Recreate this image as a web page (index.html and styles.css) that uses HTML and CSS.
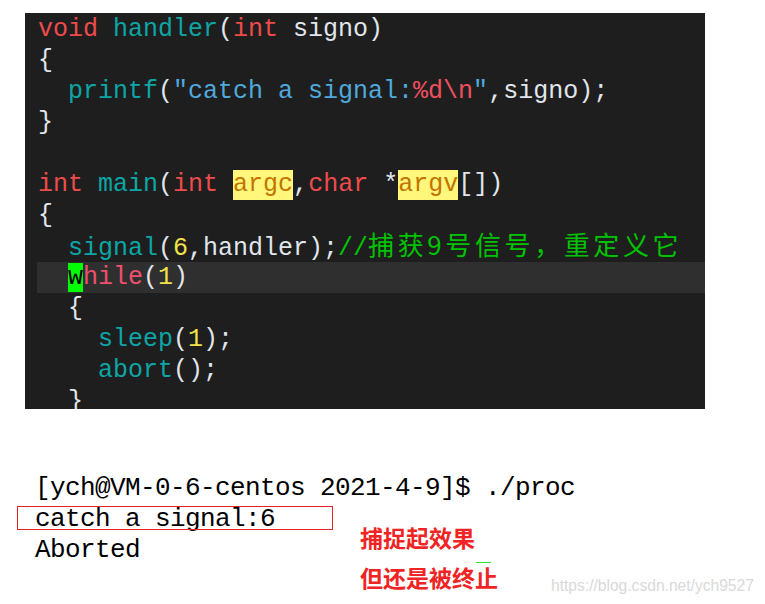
FILE: index.html
```html
<!DOCTYPE html>
<html>
<head>
<meta charset="utf-8">
<link rel="stylesheet" href="styles.css">
</head>
<body>
<div class="code">
  <div class="ln"><span class="kw">void</span> <span class="fn">handler</span><span class="pl">(</span><span class="kw">int</span> <span class="pl">signo)</span></div>
  <div class="ln"><span class="pl">{</span></div>
  <div class="ln">  <span class="fn">printf</span><span class="pl">(</span><span class="str">"catch a signal:</span><span class="fmt">%d\n</span><span class="str">"</span><span class="pl">,signo);</span></div>
  <div class="ln"><span class="pl">}</span></div>
  <div class="ln"> </div>
  <div class="ln"><span class="kw">int</span> <span class="fn">main</span><span class="pl">(</span><span class="kw">int</span> <span class="mark">argc</span><span class="pl">,</span><span class="kw">char</span> <span class="pl">*</span><span class="mark">argv</span><span class="pl">[])</span></div>
  <div class="ln"><span class="pl">{</span></div>
  <div class="ln">  <span class="fn">signal</span><span class="pl">(</span><span class="num">6</span><span class="pl">,handler);</span><span class="cmt">//<span class="cjk">捕获9号信号，重定义它</span></span></div>
  <div class="ln cur">  <span class="cursor">w</span><span class="wh">hile</span><span class="pl">(</span><span class="num">1</span><span class="pl">)</span></div>
  <div class="ln">  <span class="pl">{</span></div>
  <div class="ln">    <span class="fn">sleep</span><span class="pl">(</span><span class="num">1</span><span class="pl">);</span></div>
  <div class="ln">    <span class="fn">abort</span><span class="pl">();</span></div>
  <div class="ln">  <span class="pl">}</span></div>
</div>

<div class="bottom">
  <div class="term">
    <div class="tl">[ych@VM-0-6-centos 2021-4-9]$ ./proc</div>
    <div class="tl boxed">catch a signal:6<span class="redbox"></span></div>
    <div class="tl">Aborted</div>
  </div>
  <div class="notes">
    <div class="note">捕捉起效果</div>
    <div class="note">但还是被终<span class="last">止<span class="tick"></span></span></div>
  </div>
</div>
<div class="wm">https://blog.csdn.net/ych9527</div>
</body>
</html>
```
FILE: styles.css
```css
html, body {
  margin: 0;
  padding: 0;
  background: #ffffff;
}
body {
  width: 765px;
  height: 604px;
  position: relative;
  overflow: hidden;
}
.code {
  margin: 13px 0 0 25px;
  width: 680px;
  height: 396px;
  box-sizing: border-box;
  padding: 1px 0 0 12px;
  background: #1e1e1e;
  overflow: hidden;
  font-family: "Liberation Mono", "Noto Sans CJK SC", monospace;
  font-size: 25px;
  line-height: 31px;
  color: #e2e2e2;
}
.ln {
  white-space: pre;
  height: 31px;
  padding-left: 1px;
}
.ln.cur {
  background: #2f2f2f;
}
.kw { color: #f04b4b; }
.fn { color: #0ca6a6; }
.pl { color: #e0e6ec; }
.str { color: #4fa9dc; }
.fmt { color: #f0505e; }
.num { color: #f2e24a; }
.cmt { color: #00c400; }
.cjk {
  font-family: "Noto Sans CJK SC", sans-serif;
  font-size: 26px;
  line-height: 26px;
  letter-spacing: 3.6px;
}
.mark {
  display: inline-block;
  background: #fff67c;
  color: #c27400;
  line-height: 30px;
}
.cursor {
  display: inline-block;
  background: #00ff00;
  color: #000000;
  line-height: 29px;
}
.wh { color: #f2506e; }

.bottom {
  display: flex;
  margin-top: 64px;
}
.term {
  width: 323px;
  padding-left: 35px;
  font-family: "Liberation Mono", monospace;
  font-size: 26px;
  letter-spacing: -0.6px;
  line-height: 31px;
  color: #000000;
}
.tl {
  white-space: pre;
  height: 31px;
}
.tl.boxed {
  position: relative;
}
.redbox {
  position: absolute;
  left: -18px;
  top: 2px;
  width: 314px;
  height: 22px;
  border: 1.5px solid #e52228;
}
.notes {
  margin-top: 44px;
  margin-left: 2px;
  font-family: "Noto Sans CJK SC", sans-serif;
  font-weight: 700;
  font-size: 23px;
  line-height: 40px;
  color: #f02424;
}
.note {
  white-space: nowrap;
}
.last {
  position: relative;
}
.tick {
  position: absolute;
  left: 1px;
  top: 2px;
  width: 15px;
  height: 1px;
  background: #2ee62e;
}
.wm {
  position: absolute;
  left: 551px;
  top: 577px;
  font-family: "Liberation Sans", Arial, sans-serif;
  font-size: 15.6px;
  color: #d9d9d9;
  white-space: nowrap;
}
```
